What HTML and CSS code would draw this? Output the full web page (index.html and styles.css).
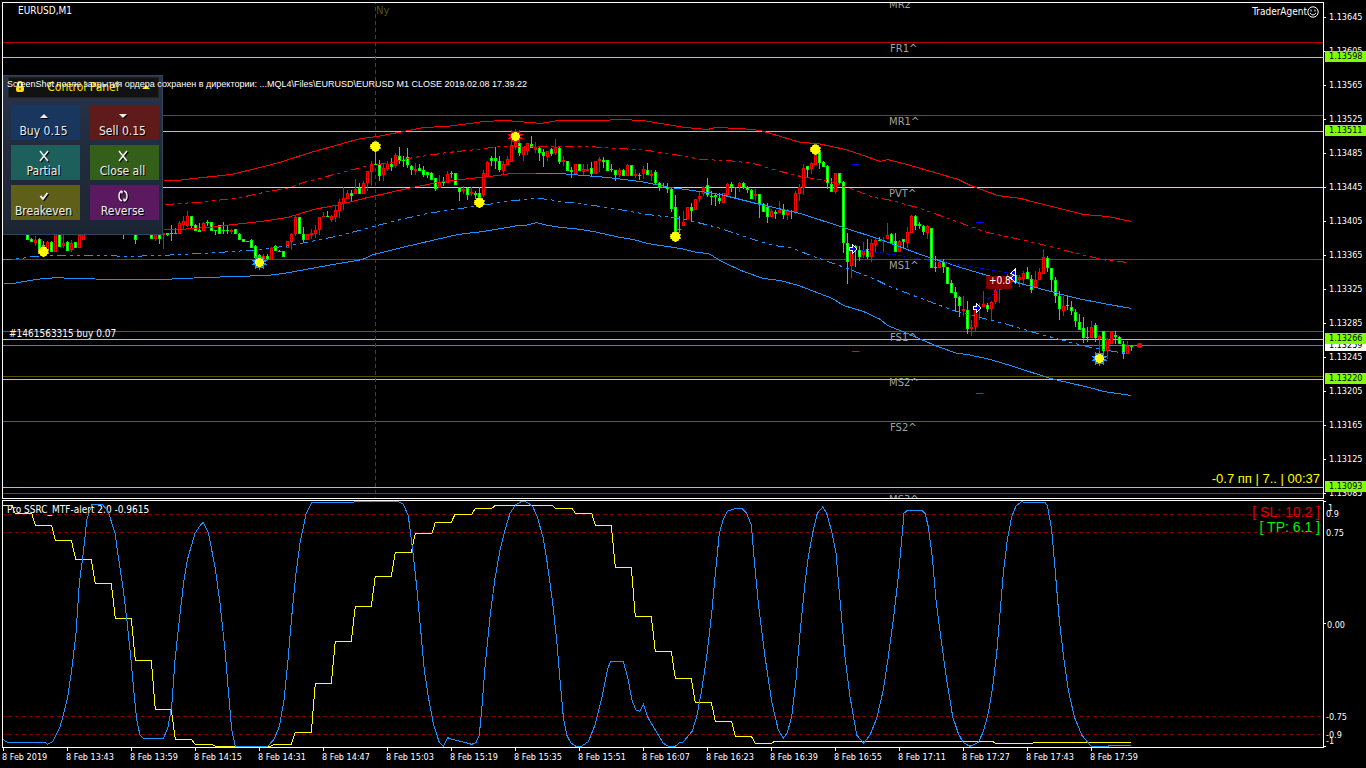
FILE: index.html
```html
<!DOCTYPE html>
<html lang="en">
<head>
<meta charset="utf-8">
<title>EURUSD,M1</title>
<link rel="stylesheet" href="styles.css">
</head>
<body>
<main class="terminal">
  <section class="chart" aria-label="EURUSD price chart">
    <svg class="plot" id="price">
      <g id="levels"></g>
      <line class="session" x1="375.5" x2="375.5" y1="0" y2="100%"/>
      <text class="session-name" x="376" y="14">Ny</text>
      <g class="pivot">
        <text x="889" y="8">MR2^</text><text x="890" y="52">FR1^</text><text x="889" y="125">MR1^</text>
        <text x="889" y="197">PVT^</text><text x="889" y="269">MS1^</text><text x="890" y="341">FS1^</text>
        <text x="889" y="386">MS2^</text><text x="890" y="431">FS2^</text><text x="889" y="503">MS3^</text>
      </g>
      <g id="candles"></g>
      <g id="bands" transform="translate(.5 .5)"></g>
      <g class="trade"><path d="M856 249L1010 273M980 308L1010 277"/></g>
      <path class="mark-blue" d="M852 164.5h7M976 222.5h7"/>
      <path class="mark-red" d="M852 351.5h7M976 393.5h7"/>
      <g id="suns"></g>
      <rect x="986" y="276" width="26" height="13" fill="#800000"/>
      <text class="profit" x="989" y="284">+0.8</text>
      <g class="arrow">
        <path d="M849.5 247.500h3v-3l4.500 4.500-4.500 4.500v-3h-3zM973.500 306.500h3v-3l4.500 4.500-4.500 4.500v-3h-3z"/>
        <path d="M1015.500 269v6.500l-5-2zM1015.500 274.500v8l-5-4.500z"/>
      </g>
      <circle cx="1139.5" cy="345.5" r="2.5" fill="red"/>
      <text class="note" x="9" y="337">#1461563315 buy 0.07</text>
      <text class="note" x="18" y="14">EURUSD,M1</text>
    </svg>
    <form class="panel">
      <header class="panel-head">
        <svg class="lock" viewBox="0 0 8 12"><path d="M2 5V3a2 2 0 0 1 4 0v2" fill="none" stroke="#ffe000" stroke-width="2"/><rect y="5" width="8" height="6" rx="2" fill="#ffe000"/><path d="M4 7v2" stroke="#222"/></svg>
        <span class="panel-title">Control Panel</span>
        <svg class="fold" viewBox="0 0 8 4"><path d="M0 4l4-4 4 4z" fill="#ffe000"/></svg>
      </header>
      <div class="actions">
        <button type="button" class="act buy"><svg viewBox="0 0 12 12"><path d="M2 8l4-4 4 4z" fill="#eee"/></svg>Buy 0.15</button>
        <button type="button" class="act sell"><svg viewBox="0 0 12 12"><path d="M2 4h8L6 8z" fill="#eee"/></svg>Sell 0.15</button>
        <button type="button" class="act partial"><svg viewBox="0 0 12 12"><path d="M2 1l8 10M10 1L2 11" stroke="#eee" stroke-width="1.6"/></svg>Partial</button>
        <button type="button" class="act close"><svg viewBox="0 0 12 12"><path d="M2 1l8 10M10 1L2 11" stroke="#eee" stroke-width="1.6"/></svg>Close all</button>
        <button type="button" class="act even"><svg viewBox="0 0 12 12"><path d="M2.500 6l2.500 3 4.500-6" fill="none" stroke="#eee" stroke-width="2"/></svg>Breakeven</button>
        <button type="button" class="act reverse"><svg viewBox="0 0 12 12"><path d="M5 1Q2 2 2 6t3 5M7 1q3 1 3 5t-3 5M3 1.500h2v2M9 10.500H7v-2" fill="none" stroke="#eee" stroke-width="1.500"/></svg>Reverse</button>
      </div>
    </form>
    <p class="message">ScreenShot после закрытия ордера сохранен в директории: ...MQL4\Files\EURUSD\EURUSD M1 CLOSE 2019.02.08 17.39.22</p>
    <p class="agent">TraderAgent<svg viewBox="0 0 12 12"><circle cx="6" cy="6" r="5.200"/><path d="M4 3.500v2M8 3.500v2M3 7q3 4 6 0"/></svg></p>
    <p class="spread">-0.7 пп | 7.. | 00:37</p>
  </section>
  <aside class="scale price-scale" id="priceScale" aria-label="Price scale"></aside>
  <section class="chart oscillator" aria-label="Oscillator">
    <svg class="plot" id="osc">
      <path class="osc-level" d="M1 13.500H1320M1 31.500H1320M1 215.500H1320M1 233.500H1320"/>
      <text class="note" x="7" y="12">Pro SSRC_MTF-alert 2.0 -0.9615</text>
      <g id="waves"></g>
    </svg>
    <div class="targets"><p class="sl">[ SL: 10.2 ]</p><p class="tp">[ TP: 6.1 ]</p></div>
  </section>
  <aside class="scale" aria-label="Oscillator scale">
    <svg class="plot">
      <path class="tick" d="M0 1.500h2M0 123.500h2M0 246.500h2"/>
      <g class="osc-label"><text x="4" y="11">1</text><text x="2" y="17">0.9</text><text x="2" y="36">0.75</text><text x="3" y="128">0.00</text><text x="2" y="220">-0.75</text><text x="2" y="238">-0.9</text><text x="2" y="244">-1</text></g>
    </svg>
  </aside>
  <footer class="times" id="times"></footer>
</main>
<script src="chart.js"></script>
</body>
</html>
```

FILE: styles.css
```css
* { box-sizing: border-box; }
body { margin: 0; background: #000; color: #fff; font-family: "DejaVu Sans Condensed", "DejaVu Sans", sans-serif; font-size: 9px; overflow: hidden; }
p { margin: 0; }
.terminal { display: grid; grid-template-columns: 1fr 42px; grid-template-rows: 1fr 248px 20px; height: 100vh; padding: 2px 0 0 2px; row-gap: 0; }
.chart { position: relative; border: 1px solid #fff; overflow: hidden; min-width: 0; margin-bottom: 1px; }
.oscillator { margin-bottom: 0; }
.plot { display: block; width: 100%; height: 100%; }
#price { position: absolute; left: -3px; top: -3px; width: calc(100% + 4px); height: calc(100% + 4px); shape-rendering: crispEdges; }
#osc { position: absolute; left: -3px; top: 0; width: calc(100% + 3px); shape-rendering: crispEdges; }
.note { fill: #fff; font-size: 10px; }
.session { stroke: #44441a; stroke-dasharray: 4 3; }
.session-name { fill: #555510; font: 10px "DejaVu Sans", sans-serif; }
.pivot { fill: #a0a0a0; font: 10px "DejaVu Sans", sans-serif; }
.profit { fill: #fff; font: 10px "DejaVu Sans Condensed", sans-serif; }
.band { fill: none; stroke-width: 1px; }
.red { stroke: #f00; }
.blue { stroke: #1e90ff; }
.yellow { stroke: #ff0; }
.dash { stroke-dasharray: 9 4 3 4 3 4; }
.trade path { stroke: #0000e0; stroke-dasharray: 3 3; }
.mark-blue { stroke: #00f; }
.mark-red { stroke: #f00; }
.arrow path { fill: #0000ff; stroke: #fff; }
.osc-level { stroke: #800000; stroke-dasharray: 4 3; }

.panel { position: absolute; left: 0; top: 72px; width: 160px; height: 160px; padding: 1px 3px 13px 5px; border: 1px solid #32465a; background: linear-gradient(#28324a, #1b2532); border-left: 0; }
.panel-head { display: flex; align-items: center; justify-content: space-between; height: 21px; padding: 0 8px 2px 7px; background: #121212; border: 1px solid #222; color: #ffe000; }
.panel-title { font-size: 12px; line-height: 18px; }
.lock { width: 8px; height: 12px; }
.fold { width: 8px; height: 4px; }
.actions { display: grid; grid-template-columns: 69px 69px; gap: 5px 10px; padding: 7px 0 0 3px; }
.act { display: flex; flex-direction: column; align-items: center; height: 35px; padding: 5px 4px 0 0; border: 0; color: #eee; font: 12px/18px "DejaVu Sans Condensed", "DejaVu Sans", sans-serif; text-shadow: 1px 1px #000; white-space: nowrap; }
.act svg { width: 12px; height: 12px; flex: none; filter: drop-shadow(1px 1px #000); }
.buy { background: #19365f; }
.sell { background: #5f1a1a; }
.partial { background: #1c5f5b; }
.close { background: #345f1a; }
.even { background: #5f5f1a; }
.reverse { background: #5b1a5f; }
.message { position: absolute; left: 4px; top: 74px; font: 9px/14px "Liberation Sans", sans-serif; white-space: nowrap; }
.agent { position: absolute; right: 4px; top: 2px; display: flex; align-items: center; font-size: 10px; line-height: 14px; }
.agent svg { width: 12px; height: 12px; fill: none; stroke: #fff; }
.spread { position: absolute; right: 3px; bottom: 11px; color: #ff0; font: 13px/16px "Liberation Sans", sans-serif; }
.targets { position: absolute; right: 3px; top: 4px; text-align: right; font: 14px/15px "Liberation Sans", sans-serif; }
.sl { color: #e00000; }
.tp { color: #00f000; }

.scale { position: relative; overflow: hidden; }
.price-scale { margin-top: -2px; }
.price { display: block; height: 34px; padding-left: 5px; line-height: 34px; position: relative; }
.price::before { content: ""; position: absolute; left: 0; top: 17px; width: 2px; height: 1px; background: #fff; }
.flag { position: absolute; left: 1px; right: 0; height: 11px; padding-left: 4px; background: #7fff00; color: #000; line-height: 11px; }
.flag-now { background: #fff; }
.tick { stroke: #fff; }
.osc-label { fill: #fff; }
.times { grid-column: 1 / -1; display: flex; }
.time { flex: 0 0 64px; position: relative; padding-top: 2px; line-height: 14px; white-space: nowrap; }
.time::before { content: ""; position: absolute; left: 1px; top: 0; width: 1px; height: 3px; background: #fff; }
```

FILE: chart.js
```js
const NS = 'http://www.w3.org/2000/svg';
const $ = id => document.getElementById(id);
function add(parent, tag, attrs) {
  const el = document.createElementNS(NS, tag);
  for (const k in attrs) el.setAttribute(k, attrs[k]);
  parent.appendChild(el);
}

// Horizontal price levels
[[42, '#b00000'], [57, '#7fff00'], [115, '#555500'], [131, '#7fff00'], [187, '#ffe020'], [259, '#555500'],
 [331, '#5a48a0'], [339, '#7fff00'], [345, '#707880'], [376, '#555500'], [379, '#7fff00'], [421, '#5a48a0'],
 [487, '#7fff00'], [493, '#555500']].forEach(([y, c]) =>
  add($('levels'), 'rect', { x: 3, y, width: '100%', height: 1, fill: c }));

// Candles, 4px apart: direction, high, body top, body bottom, low
function candles(x, text) {
  text.split(';').forEach((row, i) => {
    const [, dir, nums] = row.trim().match(/^(\w)(.*)$/);
    const n = nums.trim().split(' ').map(Number);
    const cx = x + i * 4, low = n[3] || n[2], c = dir === 'R' ? '#f00' : '#0f0';
    add($('candles'), 'rect', { x: cx, y: n[0], width: 1, height: low - n[0] + 1, fill: c });
    add($('candles'), 'rect', { x: cx - 1, y: n[1], width: 3, height: Math.max(1, n[2] - n[1] + 1), fill: c });
    if (n[2] - n[1] > 1) add($('candles'), 'rect', { x: cx, y: n[1] + 1, width: 1, height: n[2] - n[1] - 1, fill: dir === 'R' ? '#000' : '#fff' });
  });
}
candles(27, 'G 230 232 239;G 238 239 241;R 236 240 242 245;G 238 239 249;G 241 245 252;R 241 242 252;G 241 242 251;R 232 233 251;G 232 233 246;R 233 243 245 247;G 241 242 250;R 240 243 249 251;G 242 242 247;R 234 235 247;R 230 232 239');
candles(123, 'G 230 232 233 238;G 230 232 234;G 230 231 233;G 232 233 239 243;R 230 232 234;G 230 232 234;G 230 231 233;G 232 233 238;R 230 232 238 240;G 230 234 238 243');
candles(163, 'R 233 233 234 248;G 233 233 234 235;G 225 233 233 240;G 228 233 233;R 221 223 233;R 216 221 224 228;R 211 216 225 226;G 216 216 225 228;G 224 225 230;G 223 230 231 231;R 222 223 230;G 220 222 222 225;G 222 222 230;G 230 230 230 234;G 225 225 233;G 222 230 230 233;G 226 230 230 233;R 229 230 231 233;G 229 229 233;G 233 234 239;G 239 239 241;G 241 241 241;G 239 240 247 247;G 245 246 257;G 254 255 260 262;R 254 256 260;G 254 256 258 259;R 247 248 259;G 245 246 250;G 250 251 251;G 251 251 256;R 241 241 247;R 233 234 241 249;R 216 217 233 235;G 217 217 233;G 227 234 239 242;R 234 234 239;R 229 233 234 238;R 225 230 233 237;R 217 217 229 234;R 212 216 216;G 211 216 216;R 215 216 219 221;R 206 210 216 221;R 199 202 210 217;R 187 198 203 209;R 190 193 198;G 190 193 195 200;R 179 189 193;G 183 188 193;R 181 183 193;R 171 171 182 190;R 161 164 171 185;G 149 164 164;G 160 164 175 180;R 164 168 174 180;R 161 164 168 170;G 158 164 166 170;R 153 155 165 167;G 147 156 160 163;G 156 160 160 166;G 148 157 164 167;G 165 166 169 174;R 163 169 170 174;G 164 168 170;G 166 170 174 176;G 172 172 174 177;G 172 173 179;G 178 178 188 190;R 175 182 187;G 177 182 182 185;R 171 174 182;G 171 173 173 177;G 173 173 184;G 187 187 191 200;R 186 189 190 193;G 187 188 194 199;R 187 192 193 195;G 191 193 194 198;G 187 193 199 202;R 170 173 194 196;R 161 162 176;G 156 158 160 165;G 147 158 160 168;G 156 161 169 171;R 161 164 170 174;R 156 159 164;R 140 145 161;R 138 141 145 149;G 140 143 152 155;R 147 147 154 160;R 143 143 150 154;G 136 144 147;R 142 147 149 152;G 147 148 152 160;G 149 152 155 166;R 151 151 156 160;G 148 149 153 155;R 139 147 152 154;G 147 148 161 163;R 156 160 161 165;G 161 161 170;G 167 170 171 177;R 164 164 173;G 164 164 170;R 164 169 171 174;R 164 169 170;G 162 168 173 175;R 161 161 173;R 157 159 160 171;G 157 160 161 167;G 160 160 170;G 164 169 169 171;G 170 170 174 180;R 168 170 174 176;G 169 170 175;R 164 165 175;G 165 165 175;R 169 174 175 177;G 173 175 175 179;R 166 169 173 178;G 163 170 174;R 170 174 175 180;G 170 172 182 184;G 182 183 187 190;G 183 187 187;G 183 187 188 192;G 188 189 208 211;G 195 207 231 234;G 216 229 229 232;R 211 222 225;R 207 207 218;G 203 207 210 221;R 199 199 209;R 192 196 198 201;R 186 187 193 195;G 178 185 194 196;G 191 196 196 204;G 193 195 196 205;G 193 198 200 203;R 193 193 202;R 183 184 194 195;G 182 184 186 191;G 187 187 187 197;R 182 183 186 191;G 182 183 187 188;G 186 187 189 192;G 189 190 198;R 189 194 195 200;G 194 194 203 217;G 203 204 211;G 203 207 216 222;R 209 211 216;G 210 212 213 218;R 201 210 212;G 204 210 214 218;R 209 211 214 219;G 210 211 211 218;R 191 193 211 213;R 184 187 193 200;R 164 168 187 194;G 166 166 169 176;R 162 163 168 173;R 150 152 164;G 151 152 162 168;G 161 162 166;G 165 166 182 188;G 178 184 191;R 173 173 191 193;G 173 173 182 184;G 181 182 242 252;G 233 243 261 283;R 248 248 265 277;G 245 246 247 266;G 246 250 256 260;R 242 250 254 257;G 239 249 256 258;R 239 243 256 261;R 238 240 244 252;G 237 240 240;R 237 240 240 251;R 223 235 238;G 233 234 242;G 233 241 251;R 240 241 251;G 239 239 241 247;R 227 232 242 247;R 215 216 232;G 215 216 225 229;G 222 224 225 228;G 225 226 231 234;R 225 226 232 238;G 228 228 267;G 256 267 267 271;R 259 262 267;G 259 262 266 272;G 267 267 283;G 280 283 292;G 287 292 297 311;G 296 297 305 316;R 296 309 310 315;G 301 310 328 333;R 320 327 328 335;R 305 308 326 330;R 303 307 308 319;R 291 304 306;G 303 305 308 311;R 301 302 308 320;R 289 290 301 303;R 280 284 289 302;R 278 280 286;R 274 278 282;R 272 275 280;G 275 275 282 283;R 275 277 279 286;R 271 273 278 284;G 267 272 278;G 275 279 289 292;R 271 280 286;R 268 272 279;R 249 257 273;G 256 258 267 271;G 268 268 279 291;G 277 280 295 302;G 291 296 308 319;R 296 306 310 315;G 295 305 305 309;G 301 307 310 314;G 309 312 320 326;G 314 322 329;G 317 328 337 342;G 327 337 337 341;R 321 327 337;G 323 325 337 341;R 335 336 338 355;G 331 331 350 354;R 338 339 350 358;R 331 332 343;G 331 335 336 343;G 336 337 343;G 341 344 353 358;R 341 346 353;G 345 346 346 350');

// Channel bands
const band = (cls, d) => add($('bands'), 'polyline', { class: 'band ' + cls, points: d });
band('red', '163,180 177,180 193,178 230,174 260,167 282,161 310,152 360,138 377,136 408,130 423,127 445,126 470,123 483,121 505,120 530,122 540,123 557,120 600,120 620,119 642,120 660,123 685,127 707,129 715,127 740,128 760,130 770,133 800,142 817,143 845,149 857,153 880,161 887,159 910,165 958,179 970,185 997,195 1020,198 1083,214 1107,216 1131,221');
band('red dash', '165,204 180,203 208,201 240,197 268,191 290,187 303,182 330,175 360,167 390,162 413,157 447,152 467,150 500,146 587,146 620,148 647,150 680,155 700,159 727,160 753,163 780,171 800,176 830,181 853,189 873,197 887,199 920,208 967,225 987,232 1020,239 1050,246 1080,254 1107,260 1128,262');
band('red', '163,229 178,229 207,227 260,221 287,217 313,209 340,204 367,197 407,188 437,182 470,178 497,175 510,173 535,173');
band('blue', '535,173 560,173 583,175 607,177 640,181 670,187 707,192 720,194 760,204 800,213 843,227 880,239 920,254 960,267 987,275 1020,283 1077,298 1103,303 1131,308');
band('blue dash', '3,259 20,258 33,256 50,255 110,255 123,256 160,255 200,253 233,251 260,249 290,245 340,235 377,225 400,219 427,213 467,207 487,204 513,200 537,198 550,199 557,201 580,203 607,207 647,214 680,218 697,222 717,227 753,239 773,245 790,247 813,256 847,268 857,272 873,278 887,285 910,294 953,310 980,317 1007,324 1037,333 1063,340 1090,347 1113,351 1128,353');
band('blue', '3,283 13,283 23,281 43,278 60,277 67,278 122,279 163,279 180,278 233,276 267,275 283,273 327,265 362,259 373,254 410,245 453,235 465,233 483,231 507,227 517,225 525,225 536,222 543,224 560,227 573,228 593,231 620,237 633,239 647,243 680,248 697,252 708,253 723,262 743,271 763,278 780,280 798,285 832,298 843,305 863,311 880,319 887,325 907,333 937,346 957,353 967,354 990,359 1013,366 1050,378 1093,388 1103,391 1131,395');

// Reversal markers
[[43, 251], [259, 262, '#1e90ff'], [375, 146], [479, 202], [515, 136, '#f00'], [675, 236], [815, 149], [1099, 358, '#1e90ff']].forEach(([x, y, ray]) => {
  const star = [];
  for (let i = 0; i < 20; i++) {
    const r = i % 2 ? 5 : (ray ? 8 : 6), a = i * Math.PI / 10;
    star.push((x + .5 + r * Math.sin(a)).toFixed(1) + ',' + (y + .5 - r * Math.cos(a)).toFixed(1));
  }
  add($('suns'), 'polygon', { points: star.join(' '), fill: ray || '#b0a000' });
  add($('suns'), 'circle', { cx: x + .5, cy: y + .5, r: ray ? 4.5 : 5, fill: '#ff0' });
});

// Oscillator samples are kept in thirds of a pixel, with y measured from 10px above the pane
function wave(cls, parts) {
  const pts = parts.flatMap(([ox, s]) => s.split(' ').map(p => {
    const [x, y] = p.split(',').map(Number);
    return (ox + x / 3).toFixed(1) + ',' + (y / 3 - 11).toFixed(1);
  }));
  add($('waves'), 'polyline', { class: 'band ' + cls, points: pts.join(' ') });
}
wave('yellow', [
  [0, '8,46 36,46 45,70 95,70 106,106 155,106 166,151 214,151 227,208 274,208 286,280 334,280 346,385 394,385 406,511 454,511 466,658 514,658 526,748 574,748 586,763 636,763 646,769 812,769 824,763 874,763 886,727 934,727 946,580 994,580 1006,454 1054,454 1066,349 1114,349 1126,259 1174,259 1186,187 1234,187 1246,130 1296,130 1306,97 1354,97'],
  [450, '15,73 65,73 76,55 126,55 136,46 306,46 316,55 366,55 376,70 425,70 436,106 484,106 496,232 544,232 556,379 604,379 616,484 664,484 676,565 724,565 736,637 784,637 796,694 845,694 856,739 904,739 916,760 964,760 974,754'],
  [900, '278,754 286,760 398,760 400,757 692,757']]);
wave('blue', [
  [0, '8,748 22,757 135,757 142,763 158,755 180,712 202,628 215,540 228,430 238,280 250,190 260,90 275,44 308,44 325,65 345,130 355,200 370,300 380,385 392,500 402,610 410,690 420,735 432,746 490,745 503,715 515,650 525,510 538,390 552,270 562,210 585,130 600,107 610,97 625,128 645,230 660,340 675,480 685,600 695,720 706,769 803,769 822,748 838,710 852,630 865,500 875,380 888,250 900,160 918,72 935,38 1060,38 1062,35 1195,35 1210,42 1225,78 1237,170 1250,290 1262,420 1273,540 1285,620 1300,700 1317,755 1330,769 1343,743'],
  [450, '0,746 65,763 78,758 88,735 95,660 105,530 120,380 135,265 150,180 165,120 180,70 197,44 215,34 232,37 248,50 262,80 280,145 292,220 308,340 320,450 330,570 340,680 350,735 362,758 378,769 395,768 415,755 435,705 455,625 473,535 483,514 520,514 535,570 545,627 557,660 569,664 580,643 595,685 617,722 640,760 655,769 677,768 690,757 700,756 727,723 740,680 755,600 770,500 785,370 797,240 808,130 820,88 833,63 860,55 877,56 890,70 904,105 912,200 925,340 945,500 965,635 985,720 1000,745 1012,728 1025,680 1038,570 1050,430 1065,280 1075,200 1090,120 1102,70 1118,51 1130,70 1145,125 1158,190 1170,330 1185,500 1200,620 1220,735 1241,760 1260,735 1280,685 1300,600 1315,500 1330,390 1345,260 1355,150'],
  [900, '12,70 22,61 65,61 75,70 85,110 97,200 108,330 122,440 140,570 158,680 175,730 190,758 210,769 235,757 250,725 265,670 278,590 290,490 300,370 310,250 322,150 335,80 348,48 365,35 378,38 435,38 442,45 455,120 465,235 478,390 492,510 505,600 523,680 545,735 573,769 625,769 628,766 692,766']]);

// Scales
const html = (parent, cls, text) => {
  const el = document.createElement('span');
  el.className = cls; el.textContent = text; parent.appendChild(el);
  return el;
};
for (let p = 13645; p >= 13085; p -= 40) html($('priceScale'), 'price', '1.' + p);
[[340, '1.13259', 1], [51, '1.13598'], [125, '1.13511'], [333, '1.13266'], [373, '1.13220'], [481, '1.13093']].forEach(([y, t, now]) => {
  html($('priceScale'), now ? 'flag flag-now' : 'flag', t).style.top = y + 'px';
});
html($('times'), 'time', '8 Feb 2019');
for (let m = 13 * 60 + 43; m <= 17 * 60 + 59; m += 16) html($('times'), 'time', `8 Feb ${Math.floor(m / 60)}:${String(m % 60).padStart(2, '0')}`);
```
